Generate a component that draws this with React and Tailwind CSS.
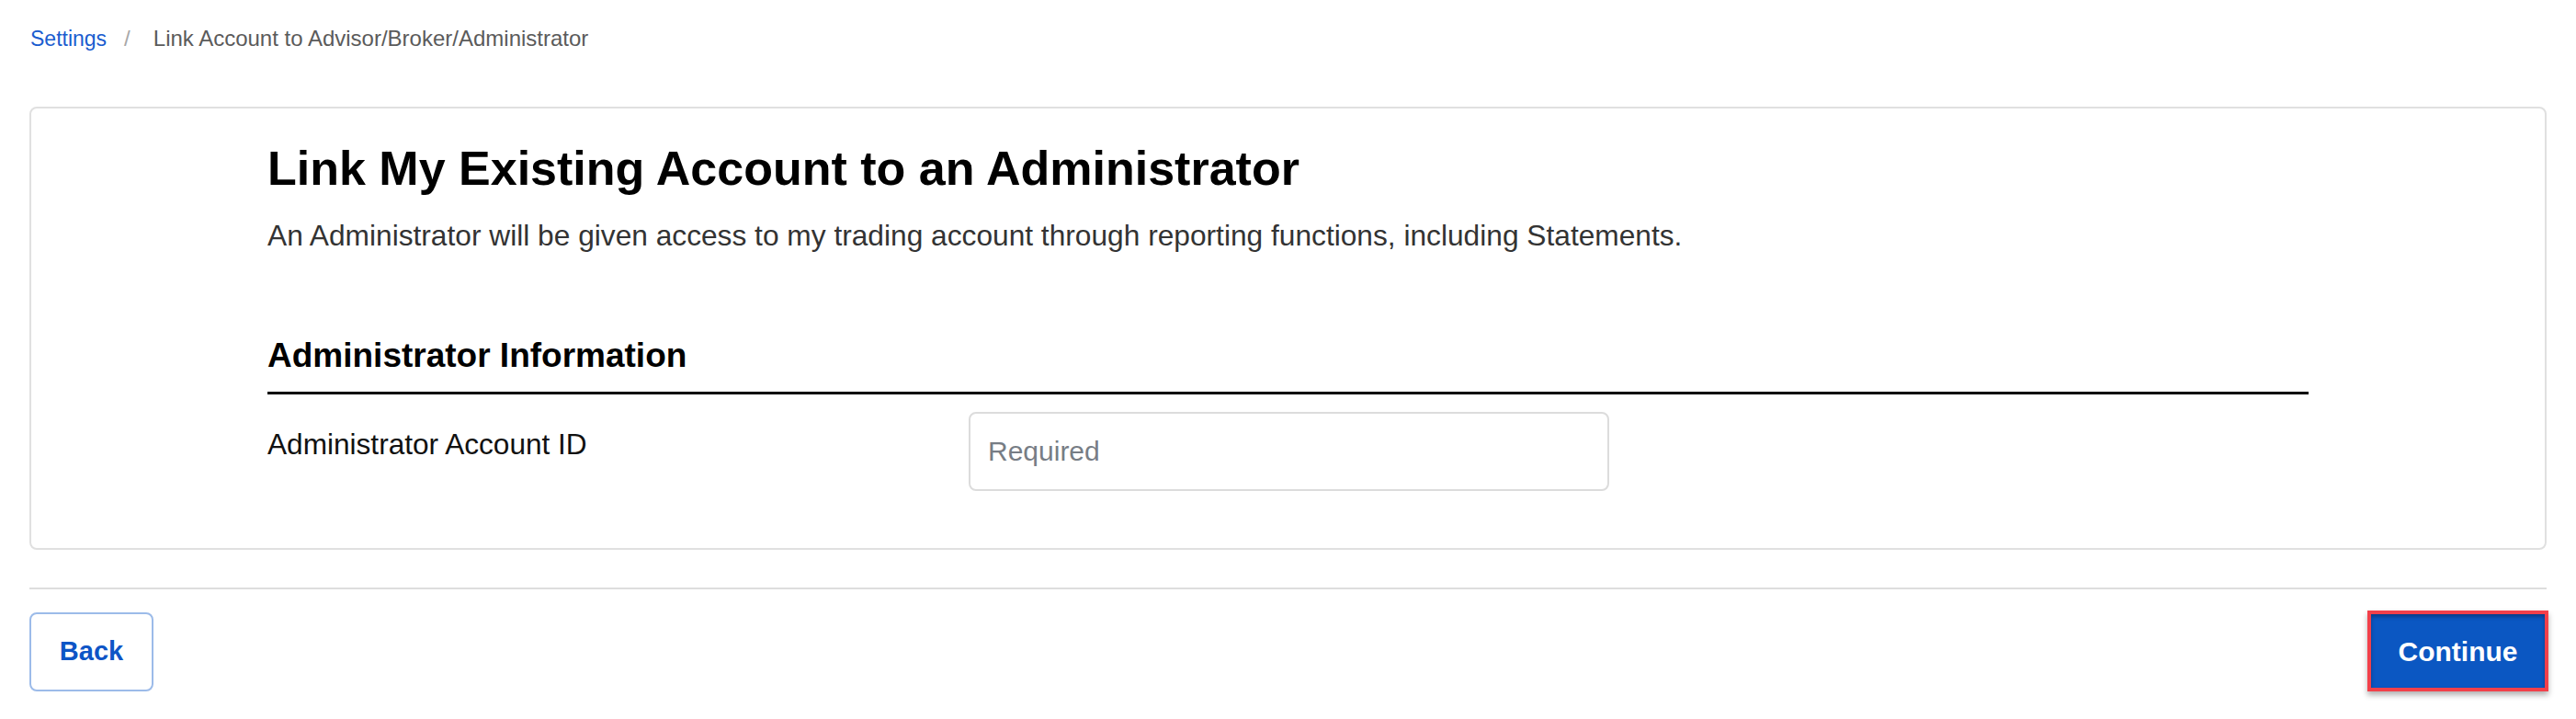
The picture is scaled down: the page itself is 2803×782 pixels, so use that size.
import { useState } from 'react';

const App = () => {
    const [accountId, setAccountId] = useState('');

    return (
        <div className="min-h-screen bg-white px-8 font-['Liberation_Sans',Arial,sans-serif]">
            {/* Breadcrumb */}
            <nav className="pt-[24px] flex items-center text-[24px] leading-[36px]">
                <a href="#" className="text-[#1a5dcf] ml-[1px] text-[23px]">Settings</a>
                <span className="text-[#a8a8a8] ml-[19px] mr-[25px]">/</span>
                <span className="text-[#5b5b5b]">Link Account to Advisor/Broker/Administrator</span>
            </nav>

            {/* Card */}
            <div className="mt-[56px] border-2 border-[#e0e0e0] rounded-lg pt-[34px] pb-[62px] pl-[257px] pr-[257px]">
                <h1 className="text-[52px] leading-[62px] font-bold text-black">
                    Link My Existing Account to an Administrator
                </h1>
                <p className="mt-[19px] text-[31.7px] leading-[46px] text-[#333333]">
                    An Administrator will be given access to my trading account through reporting functions, including Statements.
                </p>

                <h2 className="mt-[86px] text-[37px] leading-[44px] font-bold text-black pb-[17px] border-b-[3px] border-black">
                    Administrator Information
                </h2>

                <div className="mt-[19px] flex items-start">
                    <label className="w-[763px] shrink-0 mt-[12px] text-[31.6px] leading-[46px] text-[#111111]">
                        Administrator Account ID
                    </label>
                    <input
                        type="text"
                        value={accountId}
                        onChange={(e) => setAccountId(e.target.value)}
                        placeholder="Required"
                        className="w-[697px] h-[86px] border-2 border-[#dcdcdc] rounded-lg px-[19px] text-[30px] text-[#222] placeholder:text-[#777d85] focus:outline-none"
                    />
                </div>
            </div>

            {/* Divider */}
            <div className="mt-[41px] h-[2px] bg-[#dddddd]"></div>

            {/* Actions */}
            <div className="mt-[23px] flex items-end justify-between">
                <button className="w-[135px] h-[86px] border-2 border-[#9cbbe9] rounded-lg bg-white text-[#0d55c6] text-[29px] font-bold">
                    Back
                </button>
                <button className="w-[197px] h-[88px] -mr-[2px] border-4 border-[#f2404a] bg-[#0b57c2] text-white text-[30px] font-bold shadow-[inset_0_3px_4px_rgba(0,0,0,0.3),0_4px_6px_rgba(0,0,0,0.3)]">
                    Continue
                </button>
            </div>
        </div>
    );
};

export default App;
